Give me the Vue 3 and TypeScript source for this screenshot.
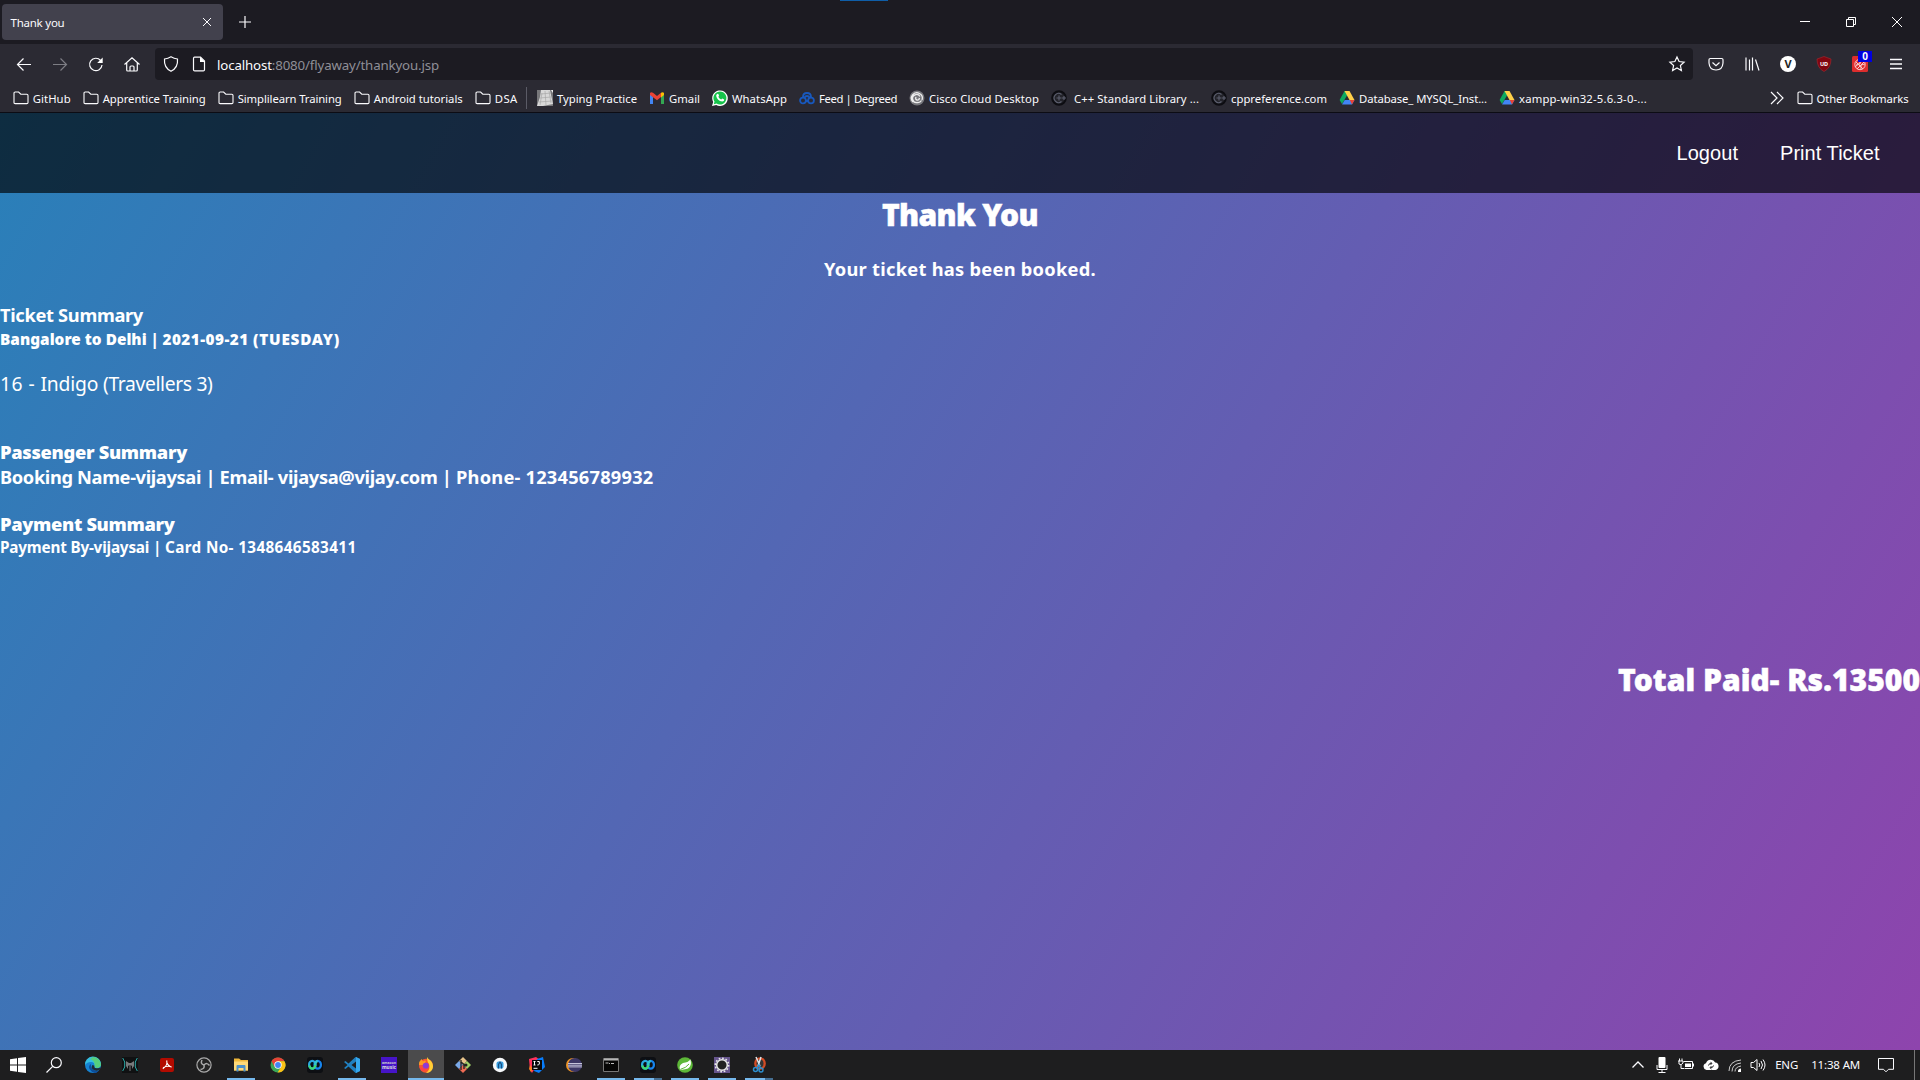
<script setup lang="ts">
import type { Directive } from 'vue'

interface Bookmark { icon: string; label: string; text: number; slot: number }
interface Task { icon: string; open?: boolean; active?: boolean; twin?: boolean }
type Piece = [text: string, width: number]

// Spreads a label's letters so that it takes exactly the given width.
const vFit: Directive<HTMLElement, number> = {
  mounted(el, { value }) {
    const natural = el.getBoundingClientRect().width
    const count = (el.textContent ?? '').length
    el.style.letterSpacing = `${(value - natural) / count}px`
  },
}

const route: Piece[] = [['Bangalore to Delhi | ', 162.5], ['2021-09-21 ', 90.5], ['(TUESDAY)', 87]]
const flight: Piece[] = [['16 - ', 40.5], ['Indigo ', 62.5], ['(Travellers 3)', 109.5]]
const passenger: Piece[] = [
  ['Booking Name-vijaysai | ', 219.5],
  ['Email- vijaysa@vijay.com | ', 236.5],
  ['Phone- 123456789932', 197.5],
]
const payment: Piece[] = [['Payment By-vijaysai | ', 165], ['Card No- 1348646583411', 191.5]]

const folder = '<path d="M1 12.5V3.2Q1 2 2.2 2H5.6L7.8 4.2H13.8Q15 4.2 15 5.4V12.5Q15 13.6 13.8 13.6H2.2Q1 13.6 1 12.5Z" fill="none" stroke="#fbfbfe" stroke-width="1.1"/>'
const drive = '<path d="M5.5 1h5L8 5.6 3 14 .6 10z" fill="#0da960"/><path d="M10.5 1l5 9h-5L5.5 1z" fill="#ffcf48"/><path d="M5.7 10h9.8L13 14.5H3z" fill="#4285f4"/><path d="M10.8 10h4.7L13 14.5z" fill="#ea4335"/>'
const cpp = '<circle cx="8" cy="8" r="6.800" fill="#24242b" stroke="#0d0d12" stroke-width="2"/><path d="M10.500 4.500A4.500 4.500 0 1 0 10.500 11.500M5.500 8h5M8 5.500v5M11 8h4M13 6v4" fill="none" stroke="#5d6070" stroke-width="1.100"/>'

const icons: Record<string, string> = {
  folder,
  drive,
  cpp,
  typing: '<path d="M0 0h16v16H0z" fill="#77777a"/><path d="M4 0h9l3 14-10 2H0L3 7z" fill="#d8d8d8"/><path d="M14 0h2v3z" fill="#eee"/><path d="M4 4l10-1M3 8l11-1M2 12l13-1M8 1l1 14M12 1l2 12M5 3L3 15" stroke="#a8a8a8" stroke-width=".7"/>',
  gmail: '<path d="M1 3.500V14h3V7z" fill="#4285f4"/><path d="M12 7v7h3V3.500z" fill="#34a853"/><path d="M1 3q1-1.500 3-.3L8 6l4-3.300V7L8 10.200 1 5z" fill="#ea4335"/><path d="M12 2.700Q14 1.500 15 3v2l-3 2.400z" fill="#fbbc04"/>',
  whatsapp: '<path d="M0 16l1.200-4A7.800 7.800 0 1 1 4.200 15z" fill="#fff"/><path d="M1.800 14.300l.7-2.700A6.500 6.500 0 1 1 4.600 13.600z" fill="#16c34b"/><path d="M5.200 4.100q1-.8 1.600 1l.2.8-.7.9q.9 1.900 2.900 2.700l1-1 2 1q.1 1.800-2 2-5-.7-6-5.500-.1-1.200 1-1.900z" fill="#fff"/>',
  degreed: '<g fill="none" stroke="#1858bd" stroke-width="1.800"><circle cx="4" cy="10.500" r="2.900"/><circle cx="12" cy="10.500" r="2.900"/><path d="M4 7Q4 3 8 3t4 4M5 8Q8 4 11 8M6.800 11h2.400"/></g>',
  cisco: '<circle cx="8" cy="8" r="7.500" fill="#77777c"/><path d="M4 12A5.400 5.400 0 1 1 13 10M12.500 10.500Q11 13 8 12.500A4 4 0 1 1 11 6.500M10.500 8Q10 10.500 8 10T7 7" fill="none" stroke="#eee" stroke-width="1.300"/>',
  edge: '<circle cx="8" cy="8" r="8" fill="#1683d2"/><path d="M0 8A8 8 0 0 1 16 7q0 4-4.500 4Q9 11 9.500 9 10 5 6 5 2 5 0 8z" fill="#35bfe0"/><path d="M8 0a8 8 0 0 1 8 7q0 4-4.500 4L9.500 9Q10.500 4 5 2z" fill="#55ce7d"/><path d="M6 7q-3 2-1.500 5T10 16h1l3-2.500Q8 14.500 6 10z" fill="#0c4e9b"/><path d="M9.500 8.700Q8.500 11 11.500 11.300q2.500.3 4-1L14.500 13q-4 1.500-6.500-.5T7.500 8z" fill="#202a33"/>',
  predator: '<path d="M0 0h16v16H0z" fill="#101112"/><path d="M.7 1l2 4v5l-2 4M15.300 1l-2 4v5l2 4" stroke="#28a9a8" fill="none"/><path d="M4 4l3 2h2l3-2v5l-2 3V9L8.500 8v6h-1V8L6 9v3L4 9z" fill="#77797b"/>',
  acrobat: '<rect x="1" y="1" width="14" height="14" rx="2" fill="#b30b00"/><path d="M7.700 3.500Q7.500 8 12.500 10.200M7.700 3.500Q9 8.500 3.800 11.800M4 10.800Q8 8.300 12.500 9.800" fill="none" stroke="#fff" stroke-width="1.100"/>',
  obs: '<circle cx="8" cy="8" r="7.100" fill="#242424" stroke="#aaa" stroke-width="1.200"/><path d="M8 8Q4 7 6 3M8 8q3-3 5.500.5M8 8q1 4-3.500 4.500" fill="none" stroke="#aaa" stroke-width="1.500"/>',
  explorer: '<path d="M1 1.500h5L8 3h7v10.500H1z" fill="#f0b83a"/><path d="M1 4.500h14v9H1z" fill="#ffda78"/><path d="M3.500 14.500V9q0-1 1-1h7q1 0 1 1v5.500h-2V11h-5v3.500z" fill="#4c91c9"/>',
  chrome: '<circle cx="8" cy="8" r="7.500" fill="#3aa757"/><path d="M1.500 4.200A7.500 7.500 0 0 1 14.500 4.200H8L4.700 10z" fill="#e64235"/><path d="M14.500 4.200A7.500 7.500 0 0 1 7.500 15.500L11.300 9.800 8 4.200z" fill="#fbc116"/><circle cx="8" cy="8" r="3.700" fill="#fff"/><circle cx="8" cy="8" r="2.900" fill="#4285f4"/>',
  webex: '<rect width="16" height="16" rx="3" fill="#0d0f13"/><g fill="none" stroke-width="2.300"><ellipse cx="10.700" cy="7.700" rx="3.200" ry="3.900" stroke="#1784ed"/><ellipse cx="5.300" cy="7.700" rx="3.200" ry="3.900" stroke="#2aa9e0"/><path d="M2.300 8.500Q3.200 11.600 5.300 11.600T8.500 8" stroke="#3ed875"/><path d="M8 8q.6-3.800 2.700-3.900" stroke="#32c5cc"/></g>',
  code: '<path d="M11.500 0L16 2v12l-4.500 2L4.500 9.500 1.500 12 0 11l3.500-3L0 5l1.500-1 3 2.500zM12 4.500L7.500 8l4.500 3.500z" fill="#2080c0" fill-rule="evenodd"/><path d="M12 0l4 2v12l-4 2z" fill="#35a8ee"/>',
  music: '<path d="M0 0h16v16H0z" fill="#4614c8"/><text x="8" y="7" font-size="3.600" text-anchor="middle" fill="#ccc">amazon</text><text x="8" y="11.800" font-size="4.800" text-anchor="middle" fill="#ddd">music</text>',
  firefox: '<circle cx="8" cy="8.700" r="7" fill="#f8572e"/><path d="M1 8Q1 4 3.500 2L5 4.500Q7 3 8 4 7 7 5 8z" fill="#ff9b22"/><path d="M9 0q1 2 4 4 3 4 1.500 8-2 4-6.500 4Q13 12 11 7 9 5 9 0z" fill="#ffcf36"/><circle cx="7.800" cy="8.800" r="3.100" fill="#8e3bd4"/><path d="M1 9q3 4 8 2-2 4-6 2z" fill="#ff3b4e"/>',
  git: '<path d="M8 0l4 4-4 4-4-4z" fill="#e8c48b"/><path d="M4 4l4 4-4 4-4-4z" fill="#7ba9e8"/><path d="M12 4l4 4-4 4-4-4z" fill="#a0d169"/><path d="M8 8l4 4-4 4-4-4z" fill="#ef6b54"/><path d="M6 3v10M6 5l5 4M9 7v5" stroke="#222" stroke-width="1.300"/><circle cx="11" cy="8" r="1.500" fill="#222"/>',
  android: '<circle cx="8" cy="8" r="7.200" fill="#f6f8fa"/><path d="M4.500 10V6.500q0-2 2-2h3q2 0 2 2V10l-1 1.500h-5z" fill="#3ba0e0"/><path d="M6.500 11.500v-4L8 5l1.500 2.500v4" stroke="#174f86" fill="none" stroke-width="1.100"/>',
  idea: '<path d="M0 2l7-2 4 3-8 13-2-3z" fill="#ff315d"/><path d="M8 2l6-2 2 10-6 6-5-2z" fill="#087cfa"/><path d="M1 8l3 4-2 3-2-3z" fill="#fc801d"/><path d="M3 3h10v10H3z" fill="#090909"/><path d="M4.500 4.500h2M5.500 4.500v3.500M4.500 8h2M8.300 4.500h2V7q0 1-2 1M4.500 11.300h4" stroke="#fff" fill="none"/>',
  eclipse: '<ellipse cx="7" cy="8" rx="7" ry="7" fill="#ee9426"/><circle cx="9" cy="8" r="7" fill="#3d3767"/><path d="M2 6.500h14M2 8.200h14M2 9.900h14" stroke="#c6c4dc" stroke-width="1"/>',
  cmd: '<path d="M.5 1.500h15v13H.5z" fill="#060606" stroke="#777"/><path d="M1 1.500h14v2H1z" fill="#b6b6b6"/><path d="M2.500 6h3M6.500 6v1M8 6.500h3" stroke="#bbb"/>',
  spring: '<circle cx="8" cy="8" r="7.800" fill="#5db738"/><path d="M13.500 2.500Q15 9 11 11.500 7 13 3 12.500 1.500 8 6 6 11 5.500 13.500 2.500z" fill="#fff"/><path d="M3.500 12.300Q9 11 12 7" fill="none" stroke="#5db738"/>',
  gear: '<path d="M0 0h16v16H0z" fill="#66558c"/><circle cx="8" cy="8" r="5.300" fill="#222" stroke="#e8e8e8" stroke-width="1.500"/><circle cx="8" cy="8" r="6.700" fill="none" stroke="#e8e8e8" stroke-width="1.500" stroke-dasharray="1.700 1.800"/>',
  snip: '<ellipse cx="9" cy="6.500" rx="4.700" ry="5.200" fill="#353535" stroke="#d44c25" stroke-width="2.300"/><path d="M5 0l4 9M10 0L7 9" stroke="#dde4e8" stroke-width="1.500"/><g fill="none" stroke="#2d8fcf" stroke-width="1.500"><circle cx="4.500" cy="12.500" r="2"/><circle cx="10" cy="13" r="2"/><path d="M6 11l2-3 1.500 3"/></g>',
}

const bookmarks: Bookmark[] = [
  { icon: 'folder', label: 'GitHub', text: 38, slot: 70 },
  { icon: 'folder', label: 'Apprentice Training', text: 103, slot: 135 },
  { icon: 'folder', label: 'Simplilearn Training', text: 104, slot: 136 },
  { icon: 'folder', label: 'Android tutorials', text: 89, slot: 121 },
  { icon: 'folder', label: 'DSA', text: 23, slot: 51 },
]
const sites: Bookmark[] = [
  { icon: 'typing', label: 'Typing Practice', text: 80, slot: 112 },
  { icon: 'gmail', label: 'Gmail', text: 31, slot: 63 },
  { icon: 'whatsapp', label: 'WhatsApp', text: 55, slot: 87 },
  { icon: 'degreed', label: 'Feed | Degreed', text: 78, slot: 110 },
  { icon: 'cisco', label: 'Cisco Cloud Desktop', text: 110, slot: 142 },
  { icon: 'cpp', label: ' C++ Standard Library ...', text: 128, slot: 160 },
  { icon: 'cpp', label: 'cppreference.com', text: 96, slot: 128 },
  { icon: 'drive', label: 'Database_ MYSQL_Inst...', text: 128, slot: 160 },
  { icon: 'drive', label: 'xampp-win32-5.6.3-0-...', text: 128, slot: 150 },
]

const tasks: Task[] = [
  { icon: 'edge' }, { icon: 'predator' }, { icon: 'acrobat' }, { icon: 'obs' },
  { icon: 'explorer', open: true }, { icon: 'chrome' }, { icon: 'webex' },
  { icon: 'code', open: true }, { icon: 'music' }, { icon: 'firefox', active: true },
  { icon: 'git' }, { icon: 'android' }, { icon: 'idea' }, { icon: 'eclipse' },
  { icon: 'cmd', open: true }, { icon: 'webex', open: true, twin: true },
  { icon: 'spring', open: true }, { icon: 'gear', open: true }, { icon: 'snip', open: true, twin: true },
]
</script>

<template>
  <div class="screen">
    <header class="tabs">
      <i class="drag-mark"></i>
      <div class="tab">
        <span v-fit="54">Thank you</span>
        <svg width="10" height="10" viewBox="0 0 10 10"><path d="M1 1l8 8M9 1L1 9" /></svg>
      </div>
      <svg class="plus" width="14" height="14" viewBox="0 0 14 14"><path d="M7 1v12M1 7h12" /></svg>
      <div class="window-buttons">
        <svg width="12" height="12" viewBox="0 0 12 12"><path d="M1 5.500h10" /></svg>
        <svg width="12" height="12" viewBox="0 0 12 12"><path d="M1.500 3.500h7v7h-7zM3.500 3.500v-2h7v7h-2" /></svg>
        <svg width="12" height="12" viewBox="0 0 12 12"><path d="M1 1l10 10M11 1L1 11" /></svg>
      </div>
    </header>

    <div class="toolbar">
      <div class="nav-buttons">
        <svg viewBox="0 0 16 16"><path d="M15 8.500H1.500M7.500 2.500l-6 6 6 6" /></svg>
        <svg class="dim" viewBox="0 0 16 16"><path d="M1 8.500h13.500M8.500 2.500l6 6-6 6" /></svg>
        <svg viewBox="0 0 16 16"><path d="M14 9A6.200 6.200 0 1 1 12.600 4.500" /><path d="M14.700 1.500V7H9.200z" class="solid" /></svg>
        <svg viewBox="0 0 16 16"><path d="M.5 8.500L8 1.800l7.500 6.700M2.700 7v7q0 1 1 1h8.600q1 0 1-1V7M6 15v-4q0-1 1-1h2q1 0 1 1v4" /></svg>
      </div>
      <div class="urlbar">
        <svg viewBox="0 0 16 16"><path d="M8 .8Q11 2.600 14.500 3 15.300 11.500 8 15.300.7 11.500 1.500 3 5 2.600 8 .8z" /></svg>
        <svg viewBox="0 0 16 16"><path d="M3.500 1.200h6L13.500 5v8.700q0 1.200-1.200 1.200H3.700q-1.200 0-1.200-1.200V2.400q0-1.200 1-1.200z" /><path d="M9 1v5h5z" class="solid" /></svg>
        <span v-fit="222" class="url"><b>localhost</b>:8080/flyaway/thankyou.jsp</span>
        <svg class="star" viewBox="0 0 16 16"><path d="M8 1l2.100 4.500 5 .6-3.700 3.400 1 5L8 12l-4.400 2.500 1-5L.9 6.100l5-.6z" /></svg>
      </div>
      <div class="tools">
        <svg viewBox="0 0 16 16"><path d="M2.300 2.500h11.400q1.300 0 1.300 1.300V7Q14.500 14 8 14T1 7V3.800q0-1.300 1.300-1.300zM4.500 6.500L8 9.700l3.500-3.200" /></svg>
        <svg viewBox="0 0 16 16"><path d="M2 1.500v13M5.500 3.500v11M8.500 1.500v13M11.500 3.500l3.500 11" /></svg>
        <span class="vee">V</span>
        <svg class="ublock" viewBox="0 0 16 16"><path d="M8 .5L15 3q0 9-7 12.500Q1 12 1 3z" fill="#800610" stroke="#a72a30" stroke-width=".6" /><text x="8" y="9.500" text-anchor="middle">UD</text></svg>
        <span class="addon">
          <svg viewBox="0 0 16 16"><rect width="16" height="16" rx="1.500" fill="#dd2d2d" stroke="none" /><circle cx="8" cy="8.500" r="5.200" /><path d="M3 11l8-7M5 13l8-8M4 6l7 7M8 4v4l-4 1M9 13V9l4-1" /></svg>
          <em>0</em>
        </span>
        <svg class="menu" viewBox="0 0 16 16"><path d="M2 3.500h12M2 8h12M2 12.500h12" /></svg>
      </div>
    </div>

    <div class="bookmarks">
      <div v-for="b in bookmarks" :key="b.label" class="bookmark" :style="{ width: b.slot + 'px' }">
        <svg viewBox="0 0 16 16" v-html="icons[b.icon]"></svg>
        <span v-fit="b.text">{{ b.label }}</span>
      </div>
      <i class="divider"></i>
      <div v-for="b in sites" :key="b.label" class="bookmark" :style="{ width: b.slot + 'px' }">
        <svg viewBox="0 0 16 16" v-html="icons[b.icon]"></svg>
        <span v-fit="b.text">{{ b.label }}</span>
      </div>
      <div class="overflow">
        <svg class="chevrons" viewBox="0 0 16 16"><path d="M2 2l6 6-6 6M8 2l6 6-6 6" /></svg>
        <svg viewBox="0 0 16 16" v-html="icons.folder"></svg>
        <span v-fit="92">Other Bookmarks</span>
      </div>
    </div>

    <main class="page">
      <nav>
        <a v-fit="61.5">Logout</a>
        <a v-fit="99.5">Print Ticket</a>
      </nav>
      <h1 class="thanks black"><span v-fit="156">Thank You</span></h1>
      <h3 class="booked"><span v-fit="272">Your ticket has been booked.</span></h3>
      <h3 class="ticket"><span v-fit="143">Ticket Summary</span></h3>
      <h4 class="black"><span v-for="[text, width] in route" :key="text" v-fit="width">{{ text }}</span></h4>
      <p><span v-for="[text, width] in flight" :key="text" v-fit="width">{{ text }}</span></p>
      <h3 class="passenger black"><span v-fit="187">Passenger Summary</span></h3>
      <h3 class="booking"><span v-for="[text, width] in passenger" :key="text" v-fit="width">{{ text }}</span></h3>
      <h3 class="payment black"><span v-fit="174.5">Payment Summary</span></h3>
      <h4 class="card"><span v-for="[text, width] in payment" :key="text" v-fit="width">{{ text }}</span></h4>
      <h1 class="total black"><span v-fit="302">Total Paid- Rs.13500</span></h1>
    </main>

    <footer class="taskbar">
      <svg class="start" viewBox="0 0 16 16"><path d="M0 2.200l7-1v6.300H0zM8 1.100L16 0v7.500H8zM0 8.500h7v6.300l-7-1zM8 8.500h8V16l-8-1.100z" /></svg>
      <svg class="search" viewBox="0 0 16 16"><circle cx="10.300" cy="5.700" r="5" /><path d="M6.700 9.300L.5 15.500" /></svg>
      <div class="tasks">
        <div v-for="(t, i) in tasks" :key="i" class="task" :class="{ open: t.open, active: t.active, twin: t.twin }">
          <svg viewBox="0 0 16 16" v-html="icons[t.icon]"></svg>
        </div>
      </div>
      <div class="tray">
        <svg viewBox="0 0 16 16"><path d="M2.500 10.500L8 5l5.500 5.500" stroke-width="1.300" /></svg>
        <svg viewBox="0 0 16 16"><rect x="4.500" y="0" width="7" height="11" rx="1" class="solid" /><path d="M3 8v4.500h10V8M8 12.500V15M4.500 15.500h7" /></svg>
        <svg viewBox="0 0 16 16"><path d="M5.500 4.500h9v7h-8M15.500 6.500v3M0 4h5M1 4v3q2 2 4-1V4M1.500 1.500V4M4 1.500V4M3 8v3.500h3" /><path d="M7 6.500h6v3.500H7z" class="solid" /></svg>
        <svg viewBox="0 0 16 16"><path d="M3.500 13A3.500 3.500 0 0 1 3 6.200 5 5 0 0 1 12.200 5.500 3.800 3.800 0 0 1 12.500 13z" class="solid" /><path d="M5.500 8.500Q6 6 8.500 6.500M7.500 5.300l1.500 1-1.300 1.500M10.500 8.500q-.5 2.500-3 2M8.500 12L7 10.700l1.300-1.500" class="dark" /></svg>
        <svg viewBox="0 0 16 16"><path d="M2 14Q2 4 14 3M5 14.500Q5 7 14 6M8 14.500Q8 10 14 9" stroke="#ccc" /><path d="M11 14q0-2 3-2.500V15h-3z" class="solid" /></svg>
        <svg viewBox="0 0 16 16"><path d="M0 5.500h2.500L6 2.500v11l-3.500-3H0zM8 6q1.500 2 0 4M10 4q3 4 0 8M12 2.500q4 5.500 0 11" /></svg>
        <span v-fit="23" class="lang">ENG</span>
        <span v-fit="49" class="clock">11:38 AM</span>
        <svg class="notice" viewBox="0 0 16 16"><path d="M.5 1.500h15v10.800H10.500L8 14.800 5.500 12.300H.5z" /></svg>
      </div>
    </footer>
  </div>
</template>

<style>
body { margin: 0; background: #1c1b22; }
</style>

<style scoped>
.screen {
  width: 1920px; height: 1080px; overflow: hidden;
  display: flex; flex-direction: column;
  font-family: "Noto Sans", "Open Sans", sans-serif; color: #fbfbfe;
}
svg { display: block; flex: none; width: 16px; height: 16px; fill: none; stroke: #fbfbfe; stroke-width: 1.2; overflow: visible; }
.bookmark svg, .overflow svg:not(.chevrons), .task svg { stroke: none; stroke-width: 1; }
svg .solid { fill: #fff; stroke: none; }
span { white-space: pre; }

.tabs { position: relative; height: 44px; flex: none; display: flex; align-items: center; background: #1c1b22; }
.drag-mark { position: absolute; left: 840px; top: 0; width: 48px; height: 1px; background: #0f5ea8; }
.tab { width: 221px; height: 36px; margin-left: 2px; box-sizing: border-box; padding: 0 11px 0 8.5px; display: flex; align-items: center; justify-content: space-between; background: #42414d; border-radius: 4px; font-size: 11.5px; }
.tab svg { width: 10px; height: 10px; stroke-width: 1; }
.plus { width: 14px; height: 14px; margin-left: 14.5px; }
.window-buttons { margin-left: auto; margin-right: 17px; display: flex; gap: 34px; }
.window-buttons svg { width: 12px; height: 12px; stroke: #fff; stroke-width: 1; }

.toolbar { height: 40px; flex: none; display: flex; align-items: center; background: #2b2a33; }
.nav-buttons { display: flex; gap: 20px; padding-left: 16px; width: 139px; }
.dim { opacity: .4; }
.urlbar { width: 1538px; height: 32px; box-sizing: border-box; padding: 0 8px; display: flex; align-items: center; background: #1c1b22; border-radius: 4px; }
.urlbar svg + svg { margin-left: 12px; }
.url { margin: 2px 0 0 10px; font-size: 13.3px; color: #8f8f97; }
.url b { font-weight: 400; color: #fbfbfe; }
.urlbar .star { margin-left: auto; }
.tools { display: flex; align-items: center; gap: 20px; margin-left: 15px; }
.vee { width: 16px; height: 16px; line-height: 16px; border-radius: 50%; background: #fff; color: #222; text-align: center; font-size: 11px; font-weight: 700; }
.ublock text { font: 700 5.5px "Noto Sans", sans-serif; fill: #fff; stroke: none; }
.addon { position: relative; }
.addon circle, .addon path { stroke: #f8c8c8; stroke-width: 1; }
.addon em { position: absolute; left: 6px; top: -5px; width: 14px; height: 11px; line-height: 11px; background: #0000e0; font-size: 10px; font-style: normal; font-weight: 700; text-align: center; }
.menu { stroke-width: 1.3; }

.bookmarks { height: 28px; flex: none; box-sizing: content-box; border-bottom: 1px solid #0c0c14; display: flex; align-items: center; padding-left: 12.7px; background: #2b2a33; font-size: 11.3px; }
.bookmark { flex: none; display: flex; align-items: center; gap: 4px; }
.divider { width: 1px; height: 22px; margin-right: 10.3px; background: #5b5b66; }
.overflow { margin-left: auto; margin-right: 11.5px; display: flex; align-items: center; gap: 4px; }
.overflow .chevrons { margin-right: 8px; }

.page { height: 937px; flex: none; background: linear-gradient(120deg, #2980b9, #8e44ad); color: #fff; }
nav { height: 80px; box-sizing: border-box; padding-right: 40.5px; display: flex; align-items: center; justify-content: flex-end; gap: 42px; background: rgba(0, 0, 0, .65); font: 20px "Liberation Sans", Arial, sans-serif; }
h1, h3, h4, p { margin: 0; line-height: 24px; white-space: nowrap; height: 24px; }
h1 { font-size: 30px; }
h3 { font-size: 18.3px; }
h4 { font-size: 15.3px; }
p { font-size: 19.3px; margin-top: 21px; }
.black { font-weight: 900; }
h1.black { -webkit-text-stroke: .5px #fff; }
.thanks { margin-top: 10px; text-align: center; }
.booked { margin-top: 30px; text-align: center; }
.ticket { margin-top: 22px; }
.passenger { margin-top: 44px; }
.booking { margin-top: 1px; }
.payment { margin-top: 23px; }
.card { margin-top: -1px; }
.total { margin-top: 109px; text-align: right; }

.taskbar { height: 30px; flex: none; display: flex; align-items: center; background: #1e1e1f; }
.start { margin-left: 10px; }
.start path { fill: #fff; stroke: none; }
.search { margin-left: 20px; }
.tasks { display: flex; margin-left: 12px; }
.task { width: 37px; height: 30px; display: flex; align-items: center; justify-content: center; box-sizing: border-box; }
.open { background: linear-gradient(#76b9ed, #76b9ed) 50% 100% / 28px 2px no-repeat; }
.twin { background-image: linear-gradient(90deg, #76b9ed 70%, #456e91 70%); }
.active { background: linear-gradient(#76b9ed, #76b9ed) 50% 100% / 36px 2px no-repeat, linear-gradient(#4b4b4c, #4b4b4c) 50% 0 / 36px 30px no-repeat; }
.task { font-weight: 700; }
.tray { margin-left: auto; width: 290px; height: 30px; display: flex; align-items: center; }
.tray svg { margin-right: 8.2px; stroke-width: 1; }
.tray .dark { stroke: #1e1e1f; }
.lang, .clock { font-size: 11.5px; margin-top: -1px; }
.clock { margin-left: 13px; }
.tray .notice { margin: 0 20px 0 18px; }
.tray::after { content: ""; width: 1px; height: 30px; background: #777; }
</style>
